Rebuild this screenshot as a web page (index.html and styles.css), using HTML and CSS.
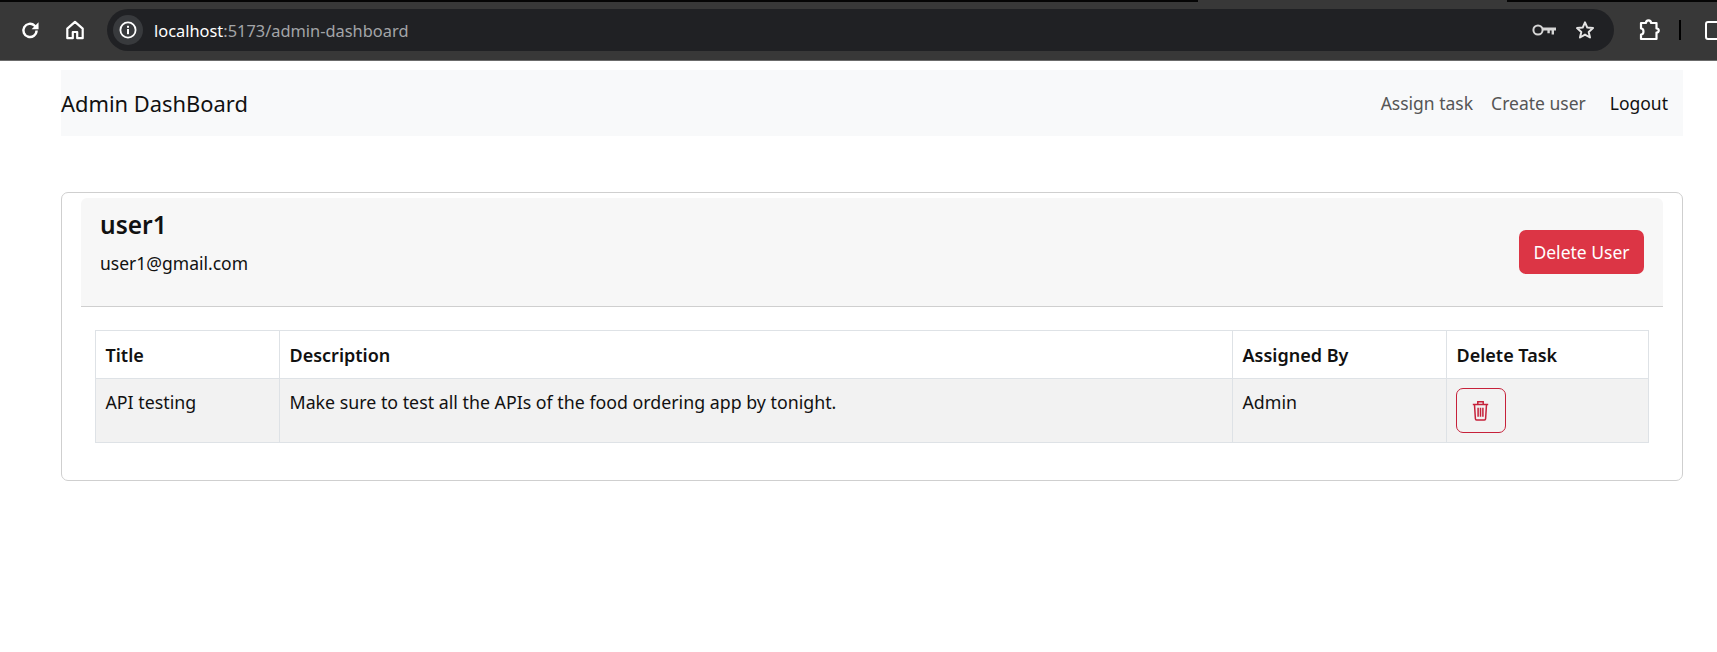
FILE: index.html
```html
<!DOCTYPE html>
<html lang="en">
<head>
    <meta charset="UTF-8">
    <title>Admin DashBoard</title>
    <link rel="stylesheet" href="styles.css">
</head>
<body>
    <div class="tab-strip">
        <span class="strip-left"></span>
        <span class="strip-right"></span>
    </div>
    <div class="browser-bar">
        <svg class="tool-icon reload" viewBox="0 0 20 20"><path d="M16 10.500a6 6 0 1 1-1.800-4.400L16.500 8.200" fill="none" stroke="#fff" stroke-width="2.200"/><path d="M17.800 3v6.400h-6.400z" fill="#fff"/></svg>
        <svg class="tool-icon home" viewBox="0 0 20 20"><path d="M3 8.800 10 2.600l7 6.200v8.600h-5v-5.600H8v5.600H3z" fill="none" stroke="#fff" stroke-width="2" stroke-linejoin="round"/></svg>
        <div class="address">
            <span class="info-chip">
                <svg viewBox="0 0 18 18" width="18" height="18"><circle cx="9" cy="9" r="7.600" fill="none" stroke="#fff" stroke-width="1.800"/><rect x="8" y="8" width="2" height="5.200" fill="#fff"/><rect x="8" y="4.800" width="2" height="2" fill="#fff"/></svg>
            </span>
            <span class="url"><span class="host">localhost</span>:5173/admin-dashboard</span>
            <svg class="key" viewBox="0 0 24 14" width="24" height="14"><circle cx="6" cy="7" r="4.600" fill="none" stroke="#d6d6d6" stroke-width="2"/><path d="M10.500 4.600H24v3h-2v4h-2.400v-4h-1.800v2.600h-2.400V7.600h-4.900z" fill="#d6d6d6"/></svg>
            <svg class="star" viewBox="0 0 20 20" width="20" height="20"><path d="M10 2.400l2.300 5.200 5.700.5-4.300 3.800 1.300 5.600L10 14.600 5 17.500l1.300-5.600L2 8.100l5.700-.5z" fill="none" stroke="#e4e4e4" stroke-width="2" stroke-linejoin="round"/></svg>
        </div>
        <svg class="tool-icon puzzle" viewBox="0 0 22 22"><path d="M3 4h5c0-3.500 5-3.500 5 0h5.500v5.500c3 0 3 4 0 4V20H3v-4.500c3.300 0 3.300-6 0-6z" fill="none" stroke="#fff" stroke-width="2.200" stroke-linejoin="round"/></svg>
        <span class="divider"></span>
        <span class="panel-icon"></span>
    </div>

    <div class="page">
        <nav class="navbar">
            <a class="brand">Admin DashBoard</a>
            <div class="nav-links">
                <a>Assign task</a>
                <a>Create user</a>
                <a class="logout">Logout</a>
            </div>
        </nav>

        <div class="card">
            <div class="card-header">
                <div>
                    <h2>user1</h2>
                    <p>user1@gmail.com</p>
                </div>
                <button class="btn-delete">Delete User</button>
            </div>
            <table>
                <thead>
                    <tr>
                        <th class="col-title">Title</th>
                        <th class="col-desc">Description</th>
                        <th class="col-by">Assigned By</th>
                        <th>Delete Task</th>
                    </tr>
                </thead>
                <tbody>
                    <tr>
                        <td>API testing</td>
                        <td>Make sure to test all the APIs of the food ordering app by tonight.</td>
                        <td>Admin</td>
                        <td>
                            <button class="btn-trash">
                                <svg viewBox="0 0 17 21" width="17" height="21"><path d="M.8 4.400h15.400M5.800 4V1.800h5.400V4M2.500 4.600l.9 14.200c0 .8.500 1.200 1.200 1.200h7.800c.7 0 1.200-.4 1.200-1.200l.9-14.200M6.100 7.800v9M8.500 7.800v9M10.900 7.800v9" fill="none" stroke="#c6213a" stroke-width="1.500"/></svg>
                            </button>
                        </td>
                    </tr>
                </tbody>
            </table>
        </div>
    </div>
</body>
</html>
```

FILE: styles.css
```css
* {
    box-sizing: border-box;
}

body {
    margin: 0;
    background-color: white;
    color: #212529;
    font-family: "Noto Sans", "Open Sans", sans-serif;
    font-size: 17.5px;
    overflow: hidden;
}

.tab-strip {
    height: 2px;
    background-color: #383838;
    display: flex;
    justify-content: space-between;
}

.strip-left {
    width: 1198px;
    background-color: #050505;
}

.strip-right {
    width: 210px;
    background-color: #050505;
}

.browser-bar {
    height: 59px;
    background-color: #383838;
    border-bottom: 1px solid #6b6b6b;
    display: flex;
    align-items: center;
    padding-left: 19px;
    padding-bottom: 2px;
}

.tool-icon {
    width: 22px;
    height: 22px;
    flex-shrink: 0;
}

.home {
    margin-left: 23px;
}

.address {
    width: 1507px;
    height: 42px;
    flex-shrink: 0;
    margin-left: 21px;
    padding: 0 19px 0 6px;
    background-color: #202124;
    border-radius: 21px;
    display: flex;
    align-items: center;
}

.info-chip {
    width: 30px;
    height: 30px;
    border-radius: 50%;
    background-color: #383a3d;
    display: flex;
    align-items: center;
    justify-content: center;
}

.url {
    margin-left: 11px;
    flex: 1;
    color: #a3a5a8;
    font-size: 16.4px;
}

.host {
    color: #fff;
}

.star {
    margin-left: 19px;
}

.puzzle {
    margin-left: 24px;
}

.divider {
    width: 2px;
    height: 20px;
    margin-left: 19px;
    background-color: #000;
    flex-shrink: 0;
}

.panel-icon {
    width: 22px;
    height: 19px;
    margin-left: 24px;
    border: 2px solid #fff;
    border-radius: 3px;
    flex-shrink: 0;
}

.page {
    padding: 9px 34px 0 61px;
}

.navbar {
    height: 66px;
    background-color: #f8f9fa;
    display: flex;
    align-items: center;
    justify-content: space-between;
    padding-right: 15px;
}

.brand {
    font-size: 21.9px;
    color: #111;
}

.nav-links {
    display: flex;
    gap: 18px;
    color: #555;
}

.logout {
    margin-left: 6px;
    color: #111;
}

.card {
    margin-top: 56px;
    height: 289px;
    border: 1px solid #cfcfcf;
    border-radius: 7px;
    padding: 5px 19px 0;
}

.card-header {
    height: 109px;
    background-color: #f7f7f7;
    border-bottom: 1px solid #cfcfcf;
    border-radius: 6px 6px 0 0;
    padding: 0 19px;
    display: flex;
    align-items: center;
    justify-content: space-between;
}

.card-header h2 {
    margin: 0;
    font-size: 24.5px;
    font-weight: 600;
    color: #111;
    line-height: 31px;
}

.card-header p {
    margin: 11px 0 0;
    color: #111;
    line-height: 24px;
}

.card-header > div {
    align-self: flex-start;
    padding-top: 11px;
}

.btn-delete {
    width: 125px;
    height: 44px;
    border: none;
    border-radius: 7px;
    background-color: #dc3545;
    color: #fff;
    font: inherit;
}

table {
    width: 1554px;
    margin: 23px 0 0 14px;
    border-collapse: collapse;
    table-layout: fixed;
}

th, td {
    border: 1px solid #dee2e6;
    padding: 10px 10px 8px 9.5px;
    text-align: left;
    vertical-align: top;
    color: #111;
    font-size: 17.8px;
    line-height: 26px;
}

th {
    height: 48px;
    padding-top: 11px;
    font-size: 18px;
    font-weight: 600;
}

td {
    height: 64px;
    background-color: #f2f2f2;
}

.col-title {
    width: 184px;
}

.col-desc {
    width: 953px;
}

.col-by {
    width: 214px;
}

.btn-trash {
    width: 50px;
    height: 45px;
    margin: -1px 0 0 -1px;
    padding: 0;
    border: 1px solid #c6213a;
    border-radius: 7px;
    background: none;
    display: flex;
    align-items: center;
    justify-content: center;
}
```
